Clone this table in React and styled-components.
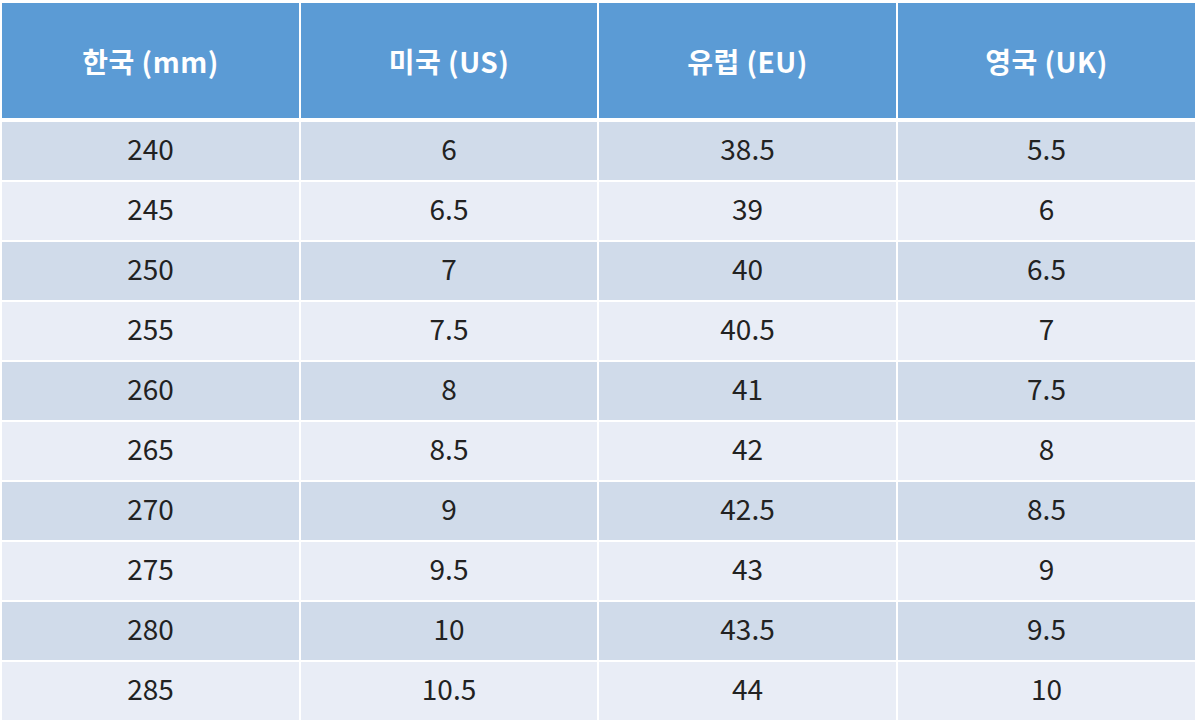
import styled, { createGlobalStyle } from 'styled-components';

const rows = [
  ['240', '6', '38.5', '5.5'],
  ['245', '6.5', '39', '6'],
  ['250', '7', '40', '6.5'],
  ['255', '7.5', '40.5', '7'],
  ['260', '8', '41', '7.5'],
  ['265', '8.5', '42', '8'],
  ['270', '9', '42.5', '8.5'],
  ['275', '9.5', '43', '9'],
  ['280', '10', '43.5', '9.5'],
  ['285', '10.5', '44', '10'],
];

const headers = ['한국 (mm)', '미국 (US)', '유럽 (EU)', '영국 (UK)'];

const App = () => (
  <>
    <Global />
    <S.Page>
      <S.Table>
        <S.HeadRow>
          {headers.map(h => (
            <S.HeadCell key={h}>{h}</S.HeadCell>
          ))}
        </S.HeadRow>
        {rows.map((r, i) => (
          <S.Row key={r[0]} $odd={i % 2 === 0}>
            {r.map((v, j) => (
              <S.Cell key={j}>{v}</S.Cell>
            ))}
          </S.Row>
        ))}
      </S.Table>
    </S.Page>
  </>
);

// -------------------------------------------------- styling ----------------------------------------------
const Global = createGlobalStyle`
  body {
    margin: 0;
    background: #fff;
    font-family: "Noto Sans CJK KR", "Noto Sans", sans-serif;
  }
`;

const S = {};
S.Page = styled.div`
  width: 1200px;
  height: 726px;
  padding: 3px 5px 0 2px;
  box-sizing: border-box;
`;

S.Table = styled.div`
  display: flex;
  flex-direction: column;
  gap: 2px;
`;

S.HeadRow = styled.div`
  display: grid;
  grid-template-columns: 297px 296px 297px 297px;
  column-gap: 2px;
  height: 115px;
  margin-bottom: 2px;
`;

S.HeadCell = styled.div`
  display: flex;
  align-items: center;
  justify-content: center;
  background: #5b9bd5;
  color: #fff;
  font-weight: 700;
  font-size: 28px;
  letter-spacing: 0.5px;
`;

S.Row = styled.div`
  display: grid;
  grid-template-columns: 297px 296px 297px 297px;
  column-gap: 2px;
  height: 58px;

  > div {
    background: ${({ $odd }) => ($odd ? '#d0dbea' : '#e9edf6')};
  }
`;

S.Cell = styled.div`
  display: flex;
  align-items: center;
  justify-content: center;
  color: #222;
  font-size: 28px;
  padding-bottom: 7px;
`;

export default App;
